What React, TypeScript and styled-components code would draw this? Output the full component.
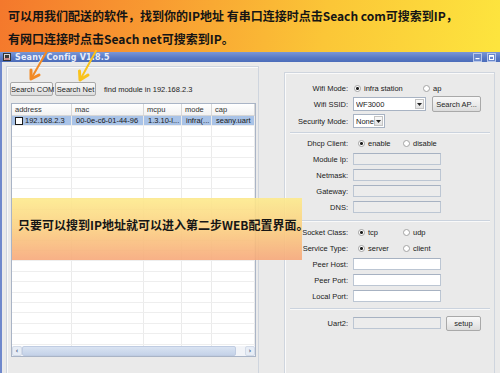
import React from 'react';
import styled, { createGlobalStyle } from 'styled-components';

const GlobalStyle = createGlobalStyle`
  html, body {
    margin: 0;
    padding: 0;
    background: #eaeaea;
  }
  body {
    font-family: 'Liberation Sans', Arial, sans-serif;
  }
`;

const Page = styled.div`
  position: relative;
  width: 500px;
  height: 373px;
  overflow: hidden;
  display: flex;
  flex-direction: column;
`;

const Banner = styled.div`
  flex: none;
  height: 52px;
  box-sizing: border-box;
  padding: 4px 0 0 8px;
  background: linear-gradient(100deg, #f4782c 0%, #f89a31 30%, #fbc637 65%, #fde53e 100%);
  font-family: 'Noto Sans CJK SC', sans-serif;
  font-weight: 700;
  font-size: 12px;
  line-height: 23px;
  color: #151515;
  white-space: nowrap;
`;

const TitleBar = styled.div`
  flex: none;
  height: 10px;
  display: flex;
  align-items: center;
  padding: 0 4px 0 3px;
  background: linear-gradient(180deg, #7b97d6 0%, #5778c4 60%, #4c6dba 100%);
  font: bold 8px 'DejaVu Sans', sans-serif;
  color: #e9eefa;
`;

const TitleText = styled.span`
  margin-left: 4px;
  flex: 1;
  letter-spacing: 0.2px;
`;

const CtrlBtn = styled.span`
  width: 7px;
  height: 7px;
  margin-left: 5px;
  border: 1px solid #b9c8ea;
  background: #6a88cc;
  display: flex;
  align-items: center;
  justify-content: center;
`;

const Body = styled.div`
  flex: 1;
  display: flex;
  gap: 25px;
  padding: 4px 0 0 4px;
  border-left: 2px solid #6f88cc;
  background: #eaeaea;
  min-height: 0;
`;

const Group = styled.div<{ $width: number; $top: number }>`
  width: ${(p) => p.$width}px;
  margin-top: ${(p) => p.$top}px;
  box-sizing: border-box;
  border: 1px solid #cfd5de;
  border-bottom: none;
  box-shadow: inset 1px 1px 0 #fafafa;
  display: flex;
  flex-direction: column;
`;

const LeftInner = styled.div`
  padding: 15px 2px 0 3px;
  display: flex;
  flex-direction: column;
`;

const Toolbar = styled.div`
  height: 14px;
  display: flex;
  align-items: center;
  gap: 2px;
`;

const Button = styled.button<{ $width: number; $height?: number }>`
  width: ${(p) => p.$width}px;
  height: ${(p) => p.$height || 14}px;
  padding: 0;
  box-sizing: border-box;
  border: 1px solid #a9a9a9;
  border-radius: 2px;
  background: linear-gradient(180deg, #f8f8f8 0%, #ececec 50%, #dcdcdc 100%);
  font: 7.5px 'Liberation Sans', Arial, sans-serif;
  color: #1e1e1e;
  white-space: nowrap;
  flex: none;
`;

const FindText = styled.span`
  margin-left: 6px;
  font-size: 7.5px;
  color: #222;
`;

const Table = styled.div`
  margin: 7px 0 0 1px;
  width: 245px;
  height: 254px;
  box-sizing: border-box;
  border: 1px solid #a9b4c6;
  background: #fff;
  display: flex;
  flex-direction: column;
  overflow: hidden;
`;

const cols = '60px 72px 38px 30px 1fr';

const HeadRow = styled.div`
  flex: none;
  height: 11px;
  display: grid;
  grid-template-columns: ${cols};
  background: linear-gradient(180deg, #ffffff, #f2f2f2);
  border-bottom: 1px solid #d6d6d6;
`;

const HeadCell = styled.div`
  border-right: 1px solid #d8d8d8;
  padding-left: 3px;
  font-size: 7.5px;
  line-height: 11px;
  color: #333;
  white-space: nowrap;
  overflow: hidden;
`;

const Rows = styled.div`
  flex: 1;
  overflow: hidden;
`;

const Row = styled.div<{ $selected?: boolean }>`
  height: 10.4px;
  box-sizing: border-box;
  display: grid;
  grid-template-columns: ${cols};
  border-bottom: 1px solid #eeeeee;
  background: ${(p) => (p.$selected ? '#a9c3e7' : '#fff')};
`;

const Cell = styled.div`
  border-right: 1px solid #ebebeb;
  padding-left: 4px;
  font-size: 7.5px;
  line-height: 10px;
  color: #1a1a1a;
  white-space: nowrap;
  overflow: hidden;
  display: flex;
  align-items: center;
`;

const Check = styled.span`
  width: 6px;
  height: 6px;
  border: 1px solid #1a1a1a;
  background: #fff;
  margin: 0 2px 0 -1px;
  flex: none;
`;

const ScrollBar = styled.div`
  flex: none;
  height: 10px;
  display: flex;
  background: #f2f4f8;
`;

const ScrollBtn = styled.div`
  width: 10px;
  height: 10px;
  box-sizing: border-box;
  border: 1px solid #d3dbe8;
  border-radius: 2px;
  background: #e7edf6;
  color: #4a5f88;
  font: bold 7px 'DejaVu Sans', sans-serif;
  display: flex;
  align-items: center;
  justify-content: center;
`;

const Thumb = styled.div`
  flex: 1;
  margin-right: 9px;
  border-radius: 2px;
  background: linear-gradient(180deg, #d9e3f2, #c4d2e8);
  border: 1px solid #bfcce2;
`;

const RightInner = styled.div`
  padding: 7px 4px 0 0;
  display: flex;
  flex-direction: column;
`;

const FormRow = styled.div<{ $mt?: number }>`
  height: 16px;
  margin-top: ${(p) => p.$mt || 0}px;
  display: flex;
  align-items: center;
`;

const Label = styled.span`
  width: 63px;
  margin-right: 5px;
  text-align: right;
  font-size: 7.5px;
  color: #202020;
  white-space: nowrap;
`;

const Options = styled.div<{ $offset: number }>`
  display: flex;
  margin-left: ${(p) => p.$offset - 5}px;
`;

const Option = styled.span<{ $width: number }>`
  width: ${(p) => p.$width}px;
  display: flex;
  align-items: center;
  font-size: 7.5px;
  color: #202020;
`;

const Radio = styled.span<{ $on?: boolean }>`
  width: 7px;
  height: 7px;
  box-sizing: border-box;
  border-radius: 50%;
  border: 1px solid #a3a3a3;
  background: ${(p) =>
    p.$on ? 'radial-gradient(circle, #1e1e1e 0 1.3px, #fff 1.6px)' : '#fff'};
  margin-right: 3px;
  flex: none;
`;

const Input = styled.div<{ $disabled?: boolean }>`
  width: 88px;
  height: 12px;
  box-sizing: border-box;
  border: 1px solid #bcc6d3;
  border-top-color: #a7b2c2;
  background: ${(p) => (p.$disabled ? '#ececec' : '#fff')};
`;

const Combo = styled.div<{ $width: number }>`
  width: ${(p) => p.$width}px;
  height: 14px;
  box-sizing: border-box;
  border: 1px solid #a8b3c3;
  background: #fff;
  display: flex;
  align-items: center;
  padding-left: 2px;
  font-size: 7.5px;
  color: #1a1a1a;
`;

const ComboText = styled.span`
  flex: 1;
  overflow: hidden;
  white-space: nowrap;
`;

const DropBtn = styled.span`
  width: 7px;
  height: 8px;
  margin-right: 1px;
  border: 1px solid #c4c4c4;
  background: linear-gradient(180deg, #fafafa, #e2e2e2);
  display: flex;
  align-items: center;
  justify-content: center;
  flex: none;
`;

const Separator = styled.div<{ $mt: number; $mb: number }>`
  height: 0;
  margin: ${(p) => p.$mt}px 0 ${(p) => p.$mb}px 5px;
  border-top: 1px solid #cbd3de;
  border-bottom: 1px solid #f9f9f9;
`;

const Note = styled.div`
  position: absolute;
  left: 12px;
  top: 198px;
  width: 290px;
  height: 62px;
  box-sizing: border-box;
  padding: 18px 0 0 6px;
  background: linear-gradient(
    180deg,
    rgba(253, 234, 140, 0.9) 0%,
    rgba(251, 206, 128, 0.9) 50%,
    rgba(247, 168, 122, 0.9) 100%
  );
  font-family: 'Noto Sans CJK SC', sans-serif;
  font-weight: 700;
  font-size: 12px;
  line-height: 18px;
  color: #161616;
  white-space: nowrap;
`;

const Arrows = styled.svg`
  position: absolute;
  left: 0;
  top: 0;
  pointer-events: none;
`;

const Caret = () => (
  <svg width="5" height="3" viewBox="0 0 5 3">
    <path d="M0 0 L5 0 L2.5 3 Z" fill="#222" />
  </svg>
);

const rows = Array.from({ length: 23 });

const App: React.FC = () => (
  <>
    <GlobalStyle />
    <Page>
      <Banner>
        <div>可以用我们配送的软件，找到你的IP地址 有串口连接时点击Seach com可搜索到IP，</div>
        <div>有网口连接时点击Seach net可搜索到IP。</div>
      </Banner>
      <TitleBar>
        <svg width="8" height="8" viewBox="0 0 8 8">
          <rect x="0.5" y="0.5" width="7" height="7" fill="#d8d8d8" stroke="#333" />
          <rect x="2" y="2" width="4" height="3" fill="#3a3a3a" />
          <rect x="1.5" y="5.5" width="5" height="1" fill="#b33" />
        </svg>
        <TitleText>Seany Config V1.8.5</TitleText>
        <CtrlBtn>
          <svg width="5" height="5" viewBox="0 0 5 5">
            <rect x="0.5" y="3" width="4" height="1.2" fill="#fff" />
          </svg>
        </CtrlBtn>
        <CtrlBtn>
          <svg width="5" height="5" viewBox="0 0 5 5">
            <rect x="0.5" y="0.5" width="4" height="4" fill="none" stroke="#fff" />
            <rect x="0.5" y="0.5" width="4" height="1.3" fill="#fff" />
          </svg>
        </CtrlBtn>
      </TitleBar>
      <Body>
        <Group $width={253} $top={0}>
          <LeftInner>
            <Toolbar>
              <Button $width={43}>Search COM</Button>
              <Button $width={41}>Search Net</Button>
              <FindText>find module in 192.168.2.3</FindText>
            </Toolbar>
            <Table>
              <HeadRow>
                <HeadCell>address</HeadCell>
                <HeadCell>mac</HeadCell>
                <HeadCell>mcpu</HeadCell>
                <HeadCell>mode</HeadCell>
                <HeadCell>cap</HeadCell>
              </HeadRow>
              <Rows>
                <Row $selected>
                  <Cell>
                    <Check />
                    192.168.2.3
                  </Cell>
                  <Cell>00-0e-c6-01-44-96</Cell>
                  <Cell>1.3.10-l...</Cell>
                  <Cell>infra(...</Cell>
                  <Cell>seany.uart</Cell>
                </Row>
                {rows.map((_, i) => (
                  <Row key={i}>
                    <Cell />
                    <Cell />
                    <Cell />
                    <Cell />
                    <Cell />
                  </Row>
                ))}
              </Rows>
              <ScrollBar>
                <ScrollBtn>‹</ScrollBtn>
                <Thumb />
                <ScrollBtn>›</ScrollBtn>
              </ScrollBar>
            </Table>
          </LeftInner>
        </Group>

        <Group $width={211} $top={6}>
          <RightInner>
            <FormRow>
              <Label>Wifi Mode:</Label>
              <Options $offset={6}>
                <Option $width={69}>
                  <Radio $on />
                  infra station
                </Option>
                <Option $width={30}>
                  <Radio />
                  ap
                </Option>
              </Options>
            </FormRow>
            <FormRow>
              <Label>Wifi SSID:</Label>
              <Combo $width={73}>
                <ComboText>WF3000</ComboText>
                <DropBtn>
                  <Caret />
                </DropBtn>
              </Combo>
              <Button $width={49} $height={16} style={{ marginLeft: 6 }}>
                Search AP...
              </Button>
            </FormRow>
            <FormRow $mt={1}>
              <Label>Security Mode:</Label>
              <Combo $width={32}>
                <ComboText>None</ComboText>
                <DropBtn>
                  <Caret />
                </DropBtn>
              </Combo>
            </FormRow>
            <Separator $mt={3} $mb={1} />
            <FormRow>
              <Label>Dhcp Client:</Label>
              <Options $offset={10}>
                <Option $width={45}>
                  <Radio $on />
                  enable
                </Option>
                <Option $width={40}>
                  <Radio />
                  disable
                </Option>
              </Options>
            </FormRow>
            <FormRow>
              <Label>Module Ip:</Label>
              <Input $disabled />
            </FormRow>
            <FormRow>
              <Label>Netmask:</Label>
              <Input $disabled />
            </FormRow>
            <FormRow>
              <Label>Gateway:</Label>
              <Input $disabled />
            </FormRow>
            <FormRow>
              <Label>DNS:</Label>
              <Input $disabled />
            </FormRow>
            <Separator $mt={5} $mb={2} />
            <FormRow>
              <Label>Socket Class:</Label>
              <Options $offset={10}>
                <Option $width={45}>
                  <Radio $on />
                  tcp
                </Option>
                <Option $width={40}>
                  <Radio />
                  udp
                </Option>
              </Options>
            </FormRow>
            <FormRow>
              <Label>Service Type:</Label>
              <Options $offset={10}>
                <Option $width={45}>
                  <Radio $on />
                  server
                </Option>
                <Option $width={40}>
                  <Radio />
                  client
                </Option>
              </Options>
            </FormRow>
            <FormRow>
              <Label>Peer Host:</Label>
              <Input />
            </FormRow>
            <FormRow>
              <Label>Peer Port:</Label>
              <Input />
            </FormRow>
            <FormRow>
              <Label>Local Port:</Label>
              <Input />
            </FormRow>
            <Separator $mt={4} $mb={5} />
            <FormRow>
              <Label>Uart2:</Label>
              <Input $disabled />
              <Button $width={35} $height={15} style={{ marginLeft: 5 }}>
                setup
              </Button>
            </FormRow>
          </RightInner>
        </Group>
      </Body>

      <Note>只要可以搜到IP地址就可以进入第二步WEB配置界面。</Note>

      <Arrows width="500" height="373" viewBox="0 0 500 373">
        <g fill="none" strokeLinecap="round" strokeLinejoin="round">
          <path d="M47 51 L31 79" stroke="#f28a25" strokeWidth="2" />
          <path d="M31 70 L31 79 L39 75" stroke="#f28a25" strokeWidth="3" />
          <path d="M96 51 L80 80" stroke="#f9c31c" strokeWidth="2" />
          <path d="M79.5 71 L80 80 L88 75" stroke="#f9c31c" strokeWidth="3" />
        </g>
      </Arrows>
    </Page>
  </>
);

export default App;
